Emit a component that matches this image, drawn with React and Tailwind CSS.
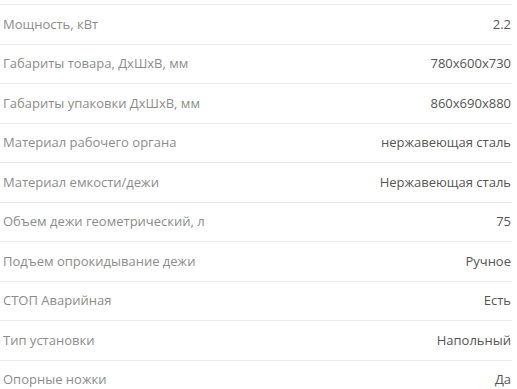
const specs = [
  ['Мощность, кВт', '2.2'],
  ['Габариты товара, ДхШхВ, мм', '780x600x730'],
  ['Габариты упаковки ДхШхВ, мм', '860x690x880'],
  ['Материал рабочего органа', 'нержавеющая сталь'],
  ['Материал емкости/дежи', 'Нержавеющая сталь'],
  ['Объем дежи геометрический, л', '75'],
  ['Подъем опрокидывание дежи', 'Ручное'],
  ['СТОП Аварийная', 'Есть'],
  ['Тип установки', 'Напольный'],
  ['Опорные ножки', 'Да'],
];

export default function App() {
  return (
    <div className="w-[517px] h-[389px] overflow-hidden bg-white font-['Open_Sans',sans-serif] text-[13px]">
      <div className="w-[512px] pt-[4px]">
        {specs.map(([label, value]) => (
          <div
            key={label}
            className="h-[39.5px] flex items-center justify-between border-t border-[#ebebeb] pl-[3px] pr-[1px]"
          >
            <span className="text-[#8c8c8c]">{label}</span>
            <span className="text-[#555]">{value}</span>
          </div>
        ))}
      </div>
    </div>
  );
}
